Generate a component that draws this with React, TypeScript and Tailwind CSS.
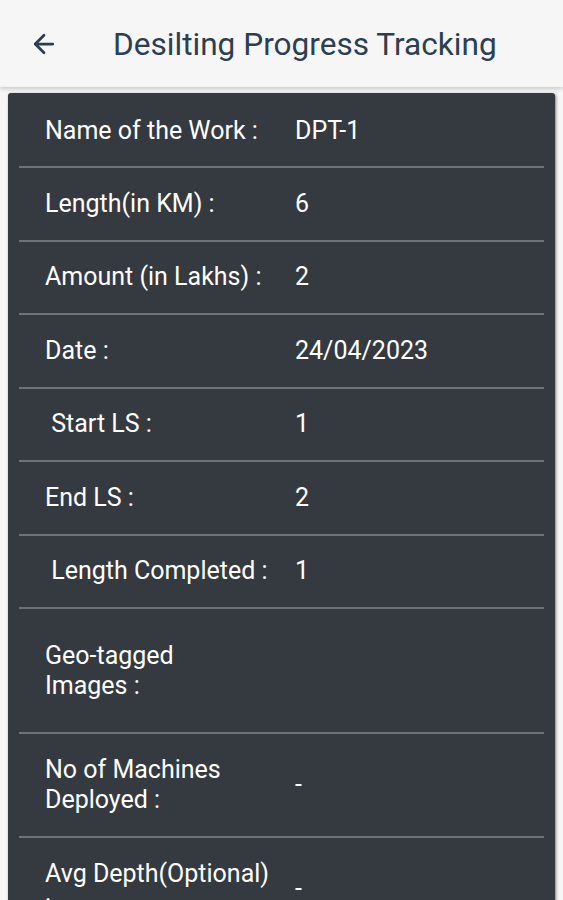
import { ArrowLeft } from 'lucide-react';

type Row = { label: React.ReactNode; value: string; pad?: string };

const rows: Row[] = [
  { label: 'Name of the Work :', value: 'DPT-1', pad: 'pt-[23px] pb-[20px]' },
  { label: 'Length(in KM) :', value: '6' },
  { label: 'Amount (in Lakhs) :', value: '2' },
  { label: 'Date :', value: '24/04/2023' },
  { label: '\u00a0Start LS :', value: '1' },
  { label: 'End LS :', value: '2' },
  { label: '\u00a0Length Completed :', value: '1' },
  { label: <>Geo-tagged<br />Images :</>, value: '', pad: 'py-[31.5px]' },
  { label: <>No of Machines<br />Deployed :</>, value: '-', pad: 'py-[21px]' },
  { label: <>Avg Depth(Optional)<br />:</>, value: '-', pad: 'py-[21px]' },
];

export default function App() {
  return (
    <div
      className="min-h-[900px] bg-[#f6f6f6] overflow-hidden"
      style={{ fontFamily: 'Roboto, "Noto Sans", sans-serif' }}
    >
      {/* 顶部栏 */}
      <div className="h-[87px] flex items-center bg-[#f6f6f6] shadow-[0_2px_4px_rgba(0,0,0,0.18)] relative z-10">
        <div className="w-[113px] pl-[29px] flex items-center">
          <ArrowLeft size={30} strokeWidth={2.2} className="text-[#2d3e50]" />
        </div>
        <h1 className="text-[31.6px] text-[#2d3e50] leading-none pt-[2px]">Desilting Progress Tracking</h1>
      </div>

      {/* 详情卡片 */}
      <div className="mx-[8px] mt-[6px] bg-[#353a40] rounded-[3px] shadow-[1px_1px_3px_rgba(0,0,0,0.5)] px-[11px]">
        {rows.map((r, i) => (
          <div
            key={i}
            className={`flex items-center border-b-2 border-[#6e7276] text-white text-[25px] leading-[30px] ${r.pad ?? 'py-[20.75px]'}`}
          >
            <div className="w-[276px] pl-[26px] shrink-0">{r.label}</div>
            <div>{r.value}</div>
          </div>
        ))}
      </div>
    </div>
  );
}
